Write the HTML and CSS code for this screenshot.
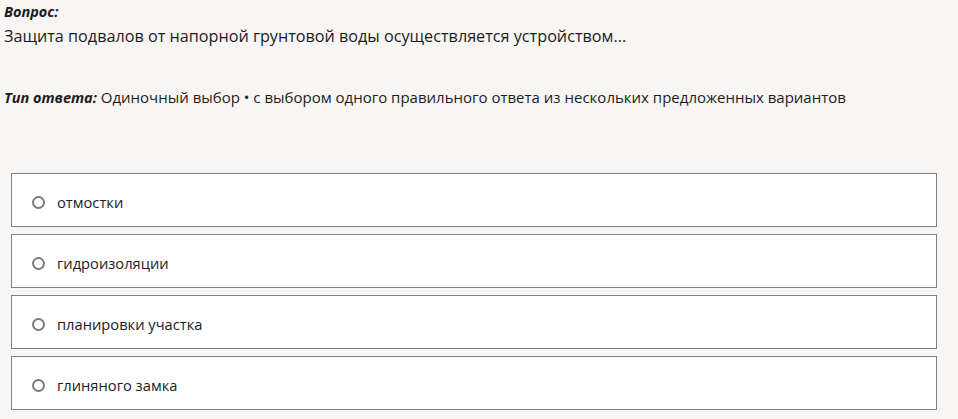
FILE: index.html
```html
<!DOCTYPE html>
<html lang="ru">
  <head>
    <meta charset="UTF-8" />
    <title>Вопрос</title>
    <link rel="stylesheet" href="styles.css">
  </head>
  <body>
    <div class="question">
      <div class="label">Вопрос:</div>
      <div class="text">Защита подвалов от напорной грунтовой воды осуществляется устройством...</div>
    </div>
    <div class="type">
      <span class="label">Тип ответа:</span> Одиночный выбор • с выбором одного правильного ответа из нескольких предложенных вариантов
    </div>
    <div class="options">
      <label class="option"><span class="radio"></span>отмостки</label>
      <label class="option"><span class="radio"></span>гидроизоляции</label>
      <label class="option"><span class="radio"></span>планировки участка</label>
      <label class="option"><span class="radio"></span>глиняного замка</label>
    </div>
  </body>
</html>
```

FILE: styles.css
```css
body {
  margin: 0;
  padding: 0 4px;
  background-color: #f7f6f4;
  color: #1c1c1c;
  font-family: "Open Sans", "Noto Sans", sans-serif;
  font-size: 15px;
}
.label {
  font-weight: bold;
  font-style: italic;
  font-size: 14.5px;
}
.question {
  line-height: 24px;
}
.question .text {
  font-size: 16.2px;
}
.type {
  margin-top: 37px;
  line-height: 24px;
}
.options {
  display: flex;
  flex-direction: column;
  gap: 7px;
  margin: 63px 17px 0 7px;
}
.option {
  box-sizing: border-box;
  display: flex;
  align-items: center;
  height: 54px;
  background-color: #fff;
  border: 1px solid #808080;
  padding: 4px 0 0 20px;
  font-size: 14.7px;
}
.radio {
  flex-shrink: 0;
  box-sizing: border-box;
  width: 13px;
  height: 13px;
  border: 2px solid #7a7a7a;
  border-radius: 50%;
  margin-right: 12px;
}
```
